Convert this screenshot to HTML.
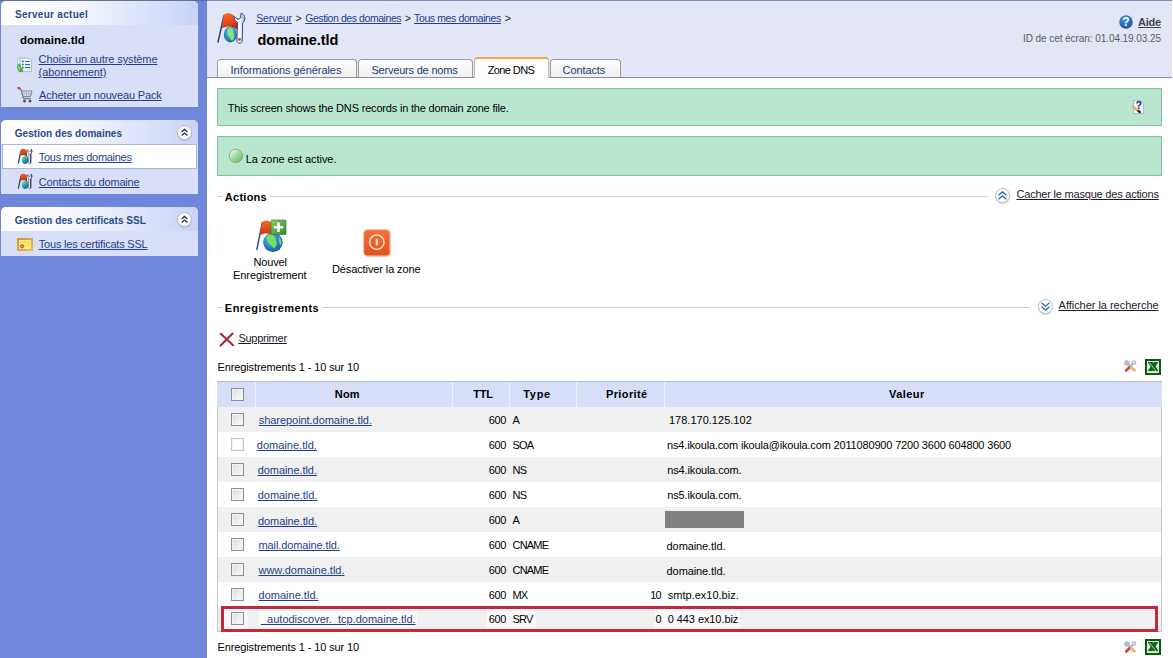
<!DOCTYPE html>
<html lang="fr">
<head>
<meta charset="utf-8">
<title>Zone DNS - domaine.tld</title>
<style>
*{box-sizing:border-box;margin:0;padding:0}
html,body{width:1173px;height:658px;overflow:hidden;background:#fff}
body{font-family:"Liberation Sans",sans-serif;font-size:11px;color:#000;position:relative}
.abs,.t{position:absolute;white-space:nowrap}
a.t{cursor:pointer}
#side{position:absolute;left:0;top:0;width:207px;height:658px;background:#6e87da}
.panel{position:absolute;left:1px;width:197px;background:#d8dff7;border-radius:5px 5px 0 0}
.hd{position:absolute;left:1px;width:197px;height:24px;border-radius:5px 5px 0 0;background:linear-gradient(90deg,#ffffff 0%,#f6f8fe 35%,#c8d3f6 100%)}
#hdr{position:absolute;left:207px;top:0;width:965px;height:78px;background:#e2e6f6;border-top:1px solid #7d8db8;border-bottom:1px solid #8c8f99}
.tab{position:absolute;top:59px;height:18px;border:1px solid #9a9ca3;border-bottom:none;border-radius:4px 4px 0 0;background:linear-gradient(#ffffff,#efefed)}
.tab.act{top:57px;height:21px;background:#fff;border-color:#b9bcc4;border-top:2px solid #f0ab45}
.green{position:absolute;left:217px;width:945px;background:#b9e6cf;border:1px solid #86c3a3}
.hr{position:absolute;height:1px;background:#d0d0d0}
.circ{position:absolute;width:15px;height:15px;border-radius:50%;background:#fff;border:1px solid #b4bcd4;box-shadow:0 1px 1px rgba(120,130,170,.35)}
.circ svg{position:absolute;left:1px;top:1px}
.row{position:absolute;left:217px;width:945px;height:25px;border-left:1px solid #c8c8c8;border-right:1px solid #c8c8c8}
.row.g{background:#f0f0f0}
.cb{position:absolute;width:13px;height:13px;border:1px solid #8e8f8f;background:linear-gradient(135deg,#dcdcdc,#fbfbfb);box-shadow:inset 0 0 0 1px #f3f3f3}
.th{position:absolute;top:382px;height:25px;background:#d6dff7}
</style>
</head>
<body>
<div id="side"></div>
<div class="abs" style="left:0;top:0;width:207px;height:1px;background:#62709c"></div><div class="panel" style="top:1px;height:106px"></div><div class="hd" style="top:1px;height:24px"></div>
<span class="t" style="left:15.0px;top:9px;font-size:10px;line-height:12px;letter-spacing:0.290px;font-weight:bold;color:#2a4b87">Serveur actuel</span>
<span class="t" style="left:20.0px;top:33px;font-size:11.5px;line-height:14px;letter-spacing:0.024px;font-weight:bold">domaine.tld</span>
<svg class="abs" style="left:17px;top:57px" width="16" height="16" viewBox="0 0 16 16"><defs><linearGradient id="dg" x1="0" y1="0" x2="1" y2="1"><stop offset="0" stop-color="#ffffff"/><stop offset="1" stop-color="#cfe6ee"/></linearGradient></defs><rect x=".5" y=".5" width="8.5" height="9" fill="#d4ecf0" stroke="#a8ccd8" stroke-width=".7"/><path d="M3.2 1.2 H12 L14.6 3.8 V14.6 H3.2 Z" fill="url(#dg)" stroke="#9ab4c8" stroke-width=".8"/><path d="M5 4.5h1.6M5 7.5h1.6M5 10.5h1.6" stroke="#2a5a7a" stroke-width="1.6"/><path d="M8 4.5h5M8 7.5h5M8 10.5h5" stroke="#2a6a8a" stroke-width="1.1"/><path d="M.6 8.2 C1 6.8 3.2 6.8 3.4 8.4 L3.6 11 L5.8 11.8 L5.6 14.6 L2.4 14.8 C.8 13.5 .2 10.5 .6 8.2Z" fill="#4cae3c" stroke="#2f8a2a" stroke-width=".5"/><path d="M1.6 9 L2.6 12.6" stroke="#d8f4c8" stroke-width=".9"/></svg>
<a class="t" style="left:38.6px;top:53px;font-size:11px;line-height:13px;letter-spacing:-0.120px;color:#1f4088;text-decoration:underline">Choisir un autre système</a>
<a class="t" style="left:38.6px;top:66px;font-size:11px;line-height:13px;letter-spacing:-0.050px;color:#1f4088;text-decoration:underline">(abonnement)</a>
<svg class="abs" style="left:17px;top:87px" width="16" height="17" viewBox="0 0 16 17"><path d="M1 1.5 L4 2.5 L6.5 11.5 L14 11.5" fill="none" stroke="#7a8494" stroke-width="1.3"/><path d="M4.5 4 L15 4 L13.5 9.5 L6 9.5 Z" fill="#dfe6f2" stroke="#7a8494" stroke-width="1"/><path d="M7 4v5.5M9.5 4v5.5M12 4v5.5M5 6.7h9.3" stroke="#9aa4b4" stroke-width=".7"/><circle cx="7.5" cy="14" r="1.5" fill="#555"/><circle cx="13" cy="14" r="1.5" fill="#555"/><path d="M0.5 0.5 L3.5 1.5" stroke="#d23" stroke-width="1.5"/></svg>
<a class="t" style="left:39.0px;top:89px;font-size:11px;line-height:13px;letter-spacing:-0.143px;color:#1f4088;text-decoration:underline">Acheter un nouveau Pack</a>

<div class="panel" style="top:120px;height:74px"></div><div class="hd" style="top:120px"></div>
<span class="t" style="left:14.8px;top:128px;font-size:10px;line-height:12px;letter-spacing:0.025px;font-weight:bold;color:#2a4b87">Gestion des domaines</span>
<span class="circ" style="left:177px;top:125px"><svg width="11" height="11" viewBox="0 0 11 11"><path d="M2.6 5 L5.5 2.4 L8.4 5 M2.6 8.6 L5.5 6 L8.4 8.6" fill="none" stroke="#1c2f66" stroke-width="1.3"/></svg></span>
<div class="abs" style="left:2px;top:144px;width:195px;height:25px;background:#fff;border:1px solid #a8b6e2"></div>
<svg class="abs" style="left:17px;top:148px" width="16" height="17" viewBox="0 0 16 17"><defs><linearGradient id="sf1" x1="0" y1="0" x2="0.2" y2="1"><stop offset="0" stop-color="#ee5f1e"/><stop offset=".65" stop-color="#d8481c"/><stop offset="1" stop-color="#7e2c1e"/></linearGradient><linearGradient id="sg1" x1="0.1" y1="0" x2="0.8" y2="1"><stop offset="0" stop-color="#b4f0a8"/><stop offset=".45" stop-color="#38b0a8"/><stop offset="1" stop-color="#14509c"/></linearGradient></defs><path d="M4 2.6 L1.3 15.6" stroke="#30425e" stroke-width="1.3" fill="none"/><ellipse cx="8.1" cy="11.6" rx="3.3" ry="4.4" fill="url(#sg1)"/><path d="M3.8 1.6 C5.5 .4 7.5 .6 9 1.8 L10.2 2.6 L9.9 8.6 C8.5 6.6 5.8 6.4 3 8 Z" fill="url(#sf1)"/><path d="M10.6 1.6 C10.4 3.4 11 4.6 11.9 5.2 L11.6 14.6 C11.6 16.4 13.9 16.4 13.9 14.6 L14 5.4 C15 4.6 15.2 2.6 14.2 1.2 L13.4 3.4 L12.2 3.6 Z" fill="#fff" stroke="#3a4a6e" stroke-width=".7"/><path d="M13.7 5.6 L13.6 15" stroke="#2c3c5e" stroke-width="1.1"/><path d="M14.3 1.4 C15 2.6 14.9 4.4 14 5.3" stroke="#2c3c5e" stroke-width="1" fill="none"/></svg>
<a class="t" style="left:38.8px;top:151px;font-size:11px;line-height:13px;letter-spacing:-0.296px;color:#1f4088;text-decoration:underline">Tous mes domaines</a>
<svg class="abs" style="left:17px;top:173px" width="16" height="17" viewBox="0 0 16 17"><defs><linearGradient id="sf2" x1="0" y1="0" x2="0.2" y2="1"><stop offset="0" stop-color="#ee5f1e"/><stop offset=".65" stop-color="#d8481c"/><stop offset="1" stop-color="#7e2c1e"/></linearGradient><linearGradient id="sg2" x1="0.1" y1="0" x2="0.8" y2="1"><stop offset="0" stop-color="#b4f0a8"/><stop offset=".45" stop-color="#38b0a8"/><stop offset="1" stop-color="#14509c"/></linearGradient></defs><path d="M4 2.6 L1.3 15.6" stroke="#30425e" stroke-width="1.3" fill="none"/><ellipse cx="8.1" cy="11.6" rx="3.3" ry="4.4" fill="url(#sg2)"/><path d="M3.8 1.6 C5.5 .4 7.5 .6 9 1.8 L10.2 2.6 L9.9 8.6 C8.5 6.6 5.8 6.4 3 8 Z" fill="url(#sf2)"/><path d="M10.6 1.6 C10.4 3.4 11 4.6 11.9 5.2 L11.6 14.6 C11.6 16.4 13.9 16.4 13.9 14.6 L14 5.4 C15 4.6 15.2 2.6 14.2 1.2 L13.4 3.4 L12.2 3.6 Z" fill="#fff" stroke="#3a4a6e" stroke-width=".7"/><path d="M13.7 5.6 L13.6 15" stroke="#2c3c5e" stroke-width="1.1"/><path d="M14.3 1.4 C15 2.6 14.9 4.4 14 5.3" stroke="#2c3c5e" stroke-width="1" fill="none"/></svg>
<a class="t" style="left:38.8px;top:176px;font-size:11px;line-height:13px;letter-spacing:-0.171px;color:#1f4088;text-decoration:underline">Contacts du domaine</a>

<div class="panel" style="top:207px;height:49px"></div><div class="hd" style="top:207px"></div>
<span class="t" style="left:14.8px;top:215px;font-size:10px;line-height:12px;letter-spacing:0.063px;font-weight:bold;color:#2a4b87">Gestion des certificats SSL</span>
<span class="circ" style="left:177px;top:212px"><svg width="11" height="11" viewBox="0 0 11 11"><path d="M2.6 5 L5.5 2.4 L8.4 5 M2.6 8.6 L5.5 6 L8.4 8.6" fill="none" stroke="#1c2f66" stroke-width="1.3"/></svg></span>
<svg class="abs" style="left:17px;top:238px" width="16" height="13" viewBox="0 0 16 13"><defs><linearGradient id="cg" x1="0" y1="0" x2="1" y2="1"><stop offset="0" stop-color="#c09838"/><stop offset="1" stop-color="#e4c258"/></linearGradient></defs><rect x="0" y="0" width="16" height="13" fill="url(#cg)"/><rect x="2" y="2" width="12" height="9" fill="#fbe77c"/><path d="M3.5 4.2h9M8 7h4.5" stroke="#ecd060" stroke-width="1"/><circle cx="5.1" cy="8.3" r="1.6" fill="#f0a080" stroke="#b84424" stroke-width="1"/></svg>
<a class="t" style="left:38.8px;top:238px;font-size:11px;line-height:13px;letter-spacing:-0.209px;color:#1f4088;text-decoration:underline">Tous les certificats SSL</a>

<div id="hdr"></div>
<svg class="abs" style="left:216px;top:11px" width="30" height="33" viewBox="0 0 30 33"><defs><linearGradient id="fg3" x1="0" y1="0" x2="0.3" y2="1"><stop offset="0" stop-color="#f7701c"/><stop offset=".7" stop-color="#e2471a"/><stop offset="1" stop-color="#a82a1a"/></linearGradient><radialGradient id="gg3" cx=".45" cy=".35" r=".7"><stop offset="0" stop-color="#4fc8e8"/><stop offset="1" stop-color="#1560a8"/></radialGradient><linearGradient id="wg3" x1="0" y1="0" x2="1" y2="0"><stop offset="0" stop-color="#ffffff"/><stop offset=".6" stop-color="#f4f6fa"/><stop offset="1" stop-color="#8aa0c8"/></linearGradient></defs><path d="M8 4.3 L1.9 31.6" stroke="#1f3f7a" stroke-width="1.5" fill="none"/><ellipse cx="14.4" cy="23.4" rx="6.6" ry="8" fill="url(#gg3)"/><path d="M12 17 C15 15.5 18 17.5 17.4 20.5 C17 22.5 19 24 18.2 27 C17.6 29.6 15 30.4 14.4 28 C13.9 26 11.8 25 11.4 22.5 C11.2 20.5 11 18.5 12 17Z" fill="#84e27c"/><path d="M7.6 3.8 C10 2 13.5 1.6 16 3.2 C18 4.5 19.5 6.5 22 7.5 L20.8 19 C18.5 15.2 12.5 14.2 6 17 Z" fill="url(#fg3)"/><path d="M18 5.6 C18.2 8.5 19.5 10.5 21.6 11.5 L20.9 29 C20.9 33.3 26.3 33.3 26.3 29 L26.6 12 C28.6 10.8 29.4 8 28.6 5.6 C28 3.8 26.6 2.6 25 2.2 L24.6 7 L21.8 8.4 Z" fill="url(#wg3)" stroke="#2f4f8f" stroke-width="1"/><circle cx="23.5" cy="28.4" r="1.4" fill="#d6303a"/></svg>
<a class="t" style="left:256.2px;top:12px;font-size:10.5px;line-height:13px;letter-spacing:-0.152px;color:#1f4088;text-decoration:underline">Serveur</a>
<span class="t" style="left:295.6px;top:12px;font-size:10.5px;line-height:13px;letter-spacing:-0.741px;color:#222">&gt;</span>
<a class="t" style="left:305.2px;top:12px;font-size:10.5px;line-height:13px;letter-spacing:-0.424px;color:#1f4088;text-decoration:underline">Gestion des domaines</a>
<span class="t" style="left:404.7px;top:12px;font-size:10.5px;line-height:13px;letter-spacing:-0.800px;color:#222">&gt;</span>
<a class="t" style="left:414.1px;top:12px;font-size:10.5px;line-height:13px;letter-spacing:-0.388px;color:#1f4088;text-decoration:underline">Tous mes domaines</a>
<span class="t" style="left:504.8px;top:12px;font-size:10.5px;line-height:13px;letter-spacing:-0.800px;color:#222">&gt;</span>
<span class="t" style="left:257.5px;top:32px;font-size:14.5px;line-height:17px;letter-spacing:-0.043px;font-weight:bold">domaine.tld</span>
<svg class="abs" style="left:1119px;top:15px" width="14" height="14" viewBox="0 0 15 15"><defs><radialGradient id="hg" cx=".4" cy=".3" r=".8"><stop offset="0" stop-color="#4a9be0"/><stop offset="1" stop-color="#0d4a9c"/></radialGradient></defs><circle cx="7.5" cy="7.5" r="7.2" fill="url(#hg)"/><text x="7.5" y="11.8" text-anchor="middle" font-family="Liberation Sans,sans-serif" font-weight="bold" font-size="13" fill="#fff">?</text></svg>
<a class="t" style="left:1138.0px;top:16px;font-size:11px;line-height:13px;letter-spacing:-0.211px;font-weight:bold;color:#41465a;text-decoration:underline">Aide</a>
<span class="t" style="left:1023.0px;top:33px;font-size:10px;line-height:12px;letter-spacing:-0.068px;color:#5c5c5c">ID de cet écran: 01.04.19.03.25</span>
<div class="tab" style="left:217px;width:140px"></div>
<div class="tab" style="left:358px;width:115px"></div>
<div class="tab act" style="left:474px;width:75px"></div>
<div class="tab" style="left:550px;width:71px"></div>
<span class="t" style="left:230.6px;top:64px;font-size:11px;line-height:13px;letter-spacing:-0.050px;color:#1f3a7a">Informations générales</span>
<span class="t" style="left:371.4px;top:64px;font-size:11px;line-height:13px;letter-spacing:-0.198px;color:#1f3a7a">Serveurs de noms</span>
<span class="t" style="left:487.7px;top:64px;font-size:11px;line-height:13px;letter-spacing:-0.595px">Zone DNS</span>
<span class="t" style="left:562.6px;top:64px;font-size:11px;line-height:13px;letter-spacing:-0.103px;color:#1f3a7a">Contacts</span>


<div class="green" style="top:88px;height:38px"></div>
<span class="t" style="left:227.7px;top:102px;font-size:11px;line-height:13px;letter-spacing:-0.185px">This screen shows the DNS records in the domain zone file.</span>
<svg class="abs" style="left:1131px;top:99px" width="15" height="16" viewBox="0 0 15 16"><path d="M2.6 1.6h6.6l3.2 3v10H2.6z" fill="#f4f8fc" stroke="#8eaccc" stroke-width=".8"/><text x="7.8" y="9.6" text-anchor="middle" font-family="Liberation Sans,sans-serif" font-weight="bold" font-size="10" fill="#16244e">?</text><path d="M1.8 7.6 L7.6 12.2" stroke="#dcae68" stroke-width="2.6" stroke-linecap="round"/><path d="M7.4 12 L9 13.2" stroke="#2a2a3a" stroke-width="2.2" stroke-linecap="round"/></svg>
<div class="green" style="top:136px;height:40px"></div>
<svg class="abs" style="left:228px;top:148px" width="16" height="16" viewBox="0 0 16 16"><defs><linearGradient id="bg1" x1="0.1" y1="0.1" x2="0.9" y2="0.9"><stop offset="0" stop-color="#eefaea"/><stop offset=".45" stop-color="#a8dca4"/><stop offset="1" stop-color="#62c064"/></linearGradient></defs><circle cx="7.9" cy="7.9" r="6.7" fill="url(#bg1)" stroke="#84a48c" stroke-width=".9"/></svg>
<span class="t" style="left:245.8px;top:153px;font-size:11px;line-height:13px;letter-spacing:-0.060px">La zone est active.</span>

<div class="hr" style="left:217px;top:196px;width:771px"></div>
<div class="abs" style="left:222px;top:190px;width:48px;height:14px;background:#fff"></div>
<span class="t" style="left:224.8px;top:191px;font-size:11px;line-height:13px;letter-spacing:0.265px;font-weight:bold">Actions</span>
<span class="circ" style="left:995px;top:188px"><svg width="11" height="11" viewBox="0 0 11 11"><path d="M1.5 5.3 L5.5 1.9 L9.5 5.3 M1.5 9.2 L5.5 5.8 L9.5 9.2" fill="none" stroke="#2d6a9c" stroke-width="1.3"/></svg></span>
<a class="t" style="left:1016.5px;top:188px;font-size:11px;line-height:13px;letter-spacing:-0.206px;color:#1a1a2a;text-decoration:underline">Cacher le masque des actions</a>

<svg class="abs" style="left:255px;top:219px" width="33" height="34" viewBox="0 0 33 34"><defs><linearGradient id="fg9" x1="0" y1="0" x2="0" y2="1"><stop offset="0" stop-color="#f4681c"/><stop offset="1" stop-color="#c93a1c"/></linearGradient><radialGradient id="gg9" cx=".4" cy=".35" r=".7"><stop offset="0" stop-color="#4fc0e8"/><stop offset="1" stop-color="#14569c"/></radialGradient><linearGradient id="pg" x1="0" y1="0" x2="1" y2="1"><stop offset="0" stop-color="#8fd06a"/><stop offset="1" stop-color="#2a8a2a"/></linearGradient></defs><path d="M7.4 3.2 L1.8 30.8" stroke="#2a4a9a" stroke-width="1.5" fill="none"/><circle cx="17.9" cy="23.4" r="9.7" fill="url(#gg9)"/><path d="M11.5 17.5 C14 14.5 19 15 20 18.5 C20.5 21 22 22.5 21.5 25.5 C21 28.5 18.5 30 17.5 28 C16.8 26 14 25.5 13 23 C12 21 10.6 19.5 11.5 17.5Z M23.5 17.2 C25.8 19 27 23 25.6 26.4 C24 25 24.2 21 23.5 17.2Z" fill="#78dc6a"/><path d="M7 3 C10 1 13 1.5 16 3 L16 15.5 C13 14 9 14 4.6 16.4 Z" fill="url(#fg9)"/><rect x="16" y="1" width="15" height="14.5" rx="1" fill="url(#pg)" stroke="#2a7a2a" stroke-width=".6"/><path d="M23.5 3.5v9.5M18.7 8.2h9.6" stroke="#fff" stroke-width="2.6"/></svg>
<span class="t" style="left:253.4px;top:256px;font-size:11px;line-height:13px;letter-spacing:-0.142px">Nouvel</span>
<span class="t" style="left:233.0px;top:269px;font-size:11px;line-height:13px;letter-spacing:-0.071px">Enregistrement</span>
<svg class="abs" style="left:363px;top:229px" width="29" height="29" viewBox="0 0 29 29"><defs><linearGradient id="og" x1="0" y1="0" x2="0" y2="1"><stop offset="0" stop-color="#f4703a"/><stop offset="1" stop-color="#e2501c"/></linearGradient></defs><rect x="1.5" y="1.5" width="26.5" height="26.5" rx="4" fill="#c9b8b0" opacity=".6"/><rect x=".8" y=".8" width="26" height="26" rx="3.5" fill="url(#og)" stroke="#f4a888" stroke-width=".9"/><circle cx="13.8" cy="13.2" r="7.2" fill="none" stroke="#fbe0d0" stroke-width="1.6"/><path d="M13.8 9.8v6.6" stroke="#fbe0d0" stroke-width="2.2"/></svg>
<span class="t" style="left:332.0px;top:263px;font-size:11px;line-height:13px;letter-spacing:-0.111px">Désactiver la zone</span>

<div class="hr" style="left:217px;top:307px;width:813px"></div>
<div class="abs" style="left:222px;top:301px;width:100px;height:14px;background:#fff"></div>
<span class="t" style="left:224.8px;top:302px;font-size:11px;line-height:13px;letter-spacing:0.506px;font-weight:bold">Enregistrements</span>
<span class="circ" style="left:1037.5px;top:298.5px"><svg width="11" height="11" viewBox="0 0 11 11"><path d="M1.5 1.8 L5.5 5.2 L9.5 1.8 M1.5 5.7 L5.5 9.1 L9.5 5.7" fill="none" stroke="#2d6a9c" stroke-width="1.3"/></svg></span>
<a class="t" style="left:1058.6px;top:299px;font-size:11px;line-height:13px;letter-spacing:-0.033px;color:#1a1a2a;text-decoration:underline">Afficher la recherche</a>

<svg class="abs" style="left:219px;top:332px" width="16" height="15" viewBox="0 0 16 15"><path d="M1.8 1.8 L14 13.2 M13.6 1.6 L1.6 13.6" stroke="#a32a3c" stroke-width="2.1" stroke-linecap="round"/></svg>
<a class="t" style="left:238.4px;top:332px;font-size:11px;line-height:13px;letter-spacing:-0.261px;color:#1a1a2a;text-decoration:underline">Supprimer</a>
<span class="t" style="left:217.5px;top:361px;font-size:11px;line-height:13px;letter-spacing:-0.117px">Enregistrements 1 - 10 sur 10</span>
<svg class="abs" style="left:1124px;top:360px" width="13" height="13" viewBox="0 0 13 13"><path d="M10 2.5 L6 6.5" stroke="#b4b8c8" stroke-width="2.4" stroke-linecap="round"/><path d="M2.8 2.8 L6.5 6.5" stroke="#b4b8c8" stroke-width="2.4" stroke-linecap="round"/><circle cx="2.9" cy="2.9" r="2" fill="none" stroke="#b4b8c8" stroke-width="1.5"/><circle cx="10" cy="2.6" r="1.7" fill="#dfe2ec" stroke="#b4b8c8" stroke-width="1.1"/><path d="M5.6 7.2 L2.2 10.4" stroke="#c8484c" stroke-width="2.8" stroke-linecap="round"/><path d="M7.2 7.2 L10.4 10.2" stroke="#e2b468" stroke-width="2.8" stroke-linecap="round"/></svg>
<svg class="abs" style="left:1145px;top:359px" width="16" height="16" viewBox="0 0 16 16"><rect x="0" y="0" width="16" height="16" fill="#0b5a12"/><rect x="2" y="2" width="12" height="12" fill="#dcf2d6"/><path d="M2.6 3 L7.6 3 L13.6 12.2 L8.6 12.2 Z" fill="#0b5a12"/><path d="M13.4 3 L9 3 L2.6 12.2 L7.2 12.2 Z" fill="#0d6216"/><path d="M4.4 3.6 L11 12" stroke="#dcf2d6" stroke-width=".8"/><rect x="2" y="12.4" width="12" height="1.6" fill="#dcf2d6"/></svg>

<div class="abs" style="left:217px;top:381px;width:945px;height:26px;background:#eef1fb;border-top:1px solid #b4bcd6"></div>
<div class="th" style="left:217px;width:38px"></div><i class="cb" style="left:231px;top:388px"></i>
<div class="th" style="left:256px;width:196px"></div>
<div class="th" style="left:453px;width:56px"></div>
<div class="th" style="left:510px;width:66px"></div>
<div class="th" style="left:577px;width:87px"></div>
<div class="th" style="left:665px;width:497px"></div>
<span class="t" style="left:334.8px;top:388px;font-size:11px;line-height:13px;letter-spacing:0.149px;font-weight:bold">Nom</span>
<span class="t" style="left:473.3px;top:388px;font-size:11px;line-height:13px;letter-spacing:-0.291px;font-weight:bold">TTL</span>
<span class="t" style="left:523.2px;top:388px;font-size:11px;line-height:13px;letter-spacing:0.710px;font-weight:bold">Type</span>
<span class="t" style="left:606.0px;top:388px;font-size:11px;line-height:13px;letter-spacing:0.373px;font-weight:bold">Priorité</span>
<span class="t" style="left:889.0px;top:388px;font-size:11px;line-height:13px;letter-spacing:0.445px;font-weight:bold">Valeur</span>
<div class="row g" style="top:407px"></div><i class="cb" style="left:231px;top:413px"></i><a class="t" style="left:258.8px;top:414px;font-size:11px;line-height:13px;letter-spacing:-0.055px;color:#1f4088;text-decoration:underline">sharepoint.domaine.tld.</a><span class="t" style="left:488.7px;top:414px;font-size:11px;line-height:13px;letter-spacing:-0.353px">600</span><span class="t" style="left:512.5px;top:414px;font-size:11px;line-height:13px;letter-spacing:-0.544px">A</span><span class="t" style="left:668.9px;top:414px;font-size:11px;line-height:13px;letter-spacing:0.020px">178.170.125.102</span>
<div class="row " style="top:432px"></div><i class="cb" style="left:231px;top:438px;border-color:#c4c4c4;background:#fff"></i><a class="t" style="left:256.8px;top:439px;font-size:11px;line-height:13px;letter-spacing:0.014px;color:#1f4088;text-decoration:underline">domaine.tld.</a><span class="t" style="left:488.7px;top:439px;font-size:11px;line-height:13px;letter-spacing:-0.353px">600</span><span class="t" style="left:512.5px;top:439px;font-size:11px;line-height:13px;letter-spacing:-0.800px">SOA</span><span class="t" style="left:667.0px;top:439px;font-size:11px;line-height:13px;letter-spacing:-0.164px">ns4.ikoula.com ikoula@ikoula.com 2011080900 7200 3600 604800 3600</span>
<div class="row g" style="top:457px"></div><i class="cb" style="left:231px;top:463px"></i><a class="t" style="left:257.7px;top:464px;font-size:11px;line-height:13px;letter-spacing:-0.061px;color:#1f4088;text-decoration:underline">domaine.tld.</a><span class="t" style="left:488.7px;top:464px;font-size:11px;line-height:13px;letter-spacing:-0.353px">600</span><span class="t" style="left:512.5px;top:464px;font-size:11px;line-height:13px;letter-spacing:-0.800px">NS</span><span class="t" style="left:667.3px;top:464px;font-size:11px;line-height:13px;letter-spacing:-0.149px">ns4.ikoula.com.</span>
<div class="row " style="top:482px"></div><i class="cb" style="left:231px;top:488px"></i><a class="t" style="left:257.7px;top:489px;font-size:11px;line-height:13px;letter-spacing:-0.020px;color:#1f4088;text-decoration:underline">domaine.tld.</a><span class="t" style="left:488.7px;top:489px;font-size:11px;line-height:13px;letter-spacing:-0.353px">600</span><span class="t" style="left:512.5px;top:489px;font-size:11px;line-height:13px;letter-spacing:-0.800px">NS</span><span class="t" style="left:667.3px;top:489px;font-size:11px;line-height:13px;letter-spacing:-0.149px">ns5.ikoula.com.</span>
<div class="row g" style="top:507px"></div><i class="cb" style="left:231px;top:513px"></i><a class="t" style="left:258.0px;top:515px;font-size:11px;line-height:13px;letter-spacing:-0.078px;color:#1f4088;text-decoration:underline">domaine.tld.</a><span class="t" style="left:488.7px;top:514px;font-size:11px;line-height:13px;letter-spacing:-0.353px">600</span><span class="t" style="left:512.5px;top:514px;font-size:11px;line-height:13px;letter-spacing:-0.544px">A</span><div class="abs" style="left:665px;top:511px;width:79px;height:17px;background:#808080"></div>
<div class="row " style="top:532px"></div><i class="cb" style="left:231px;top:538px"></i><a class="t" style="left:258.5px;top:539px;font-size:11px;line-height:13px;letter-spacing:-0.115px;color:#1f4088;text-decoration:underline">mail.domaine.tld.</a><span class="t" style="left:488.7px;top:539px;font-size:11px;line-height:13px;letter-spacing:-0.353px">600</span><span class="t" style="left:512.5px;top:539px;font-size:11px;line-height:13px;letter-spacing:-0.800px">CNAME</span><span class="t" style="left:666.6px;top:540px;font-size:11px;line-height:13px;letter-spacing:-0.095px">domaine.tld.</span>
<div class="row g" style="top:557px"></div><i class="cb" style="left:231px;top:563px"></i><a class="t" style="left:258.5px;top:564px;font-size:11px;line-height:13px;letter-spacing:-0.014px;color:#1f4088;text-decoration:underline">www.domaine.tld.</a><span class="t" style="left:488.7px;top:564px;font-size:11px;line-height:13px;letter-spacing:-0.353px">600</span><span class="t" style="left:512.5px;top:564px;font-size:11px;line-height:13px;letter-spacing:-0.800px">CNAME</span><span class="t" style="left:666.6px;top:565px;font-size:11px;line-height:13px;letter-spacing:-0.095px">domaine.tld.</span>
<div class="row " style="top:582px"></div><i class="cb" style="left:231px;top:588px"></i><a class="t" style="left:258.5px;top:589px;font-size:11px;line-height:13px;letter-spacing:0.014px;color:#1f4088;text-decoration:underline">domaine.tld.</a><span class="t" style="left:488.7px;top:589px;font-size:11px;line-height:13px;letter-spacing:-0.353px">600</span><span class="t" style="left:512.5px;top:589px;font-size:11px;line-height:13px;letter-spacing:-0.800px">MX</span><span class="t" style="left:650.3px;top:589px;font-size:11px;line-height:13px;letter-spacing:-0.800px">10</span><span class="t" style="left:667.8px;top:589px;font-size:11px;line-height:13px;letter-spacing:-0.002px">smtp.ex10.biz.</span>
<div class="row g" style="top:607px;height:24px"></div><div class="abs" style="left:224px;top:609px;width:24px;height:20px;background:#f8f8f8"></div><div class="abs" style="left:259px;top:611px;width:158px;height:16px;background:#fafafa"></div><div class="abs" style="left:487px;top:610px;width:49px;height:18px;background:#fafafa"></div><div class="abs" style="left:655px;top:610px;width:85px;height:18px;background:#fafafa"></div><i class="cb" style="left:231px;top:612px"></i><a class="t" style="left:261.0px;top:613px;font-size:11px;line-height:13px;letter-spacing:-0.004px;color:#1f4088;text-decoration:underline">_autodiscover._tcp.domaine.tld.</a><span class="t" style="left:488.7px;top:613px;font-size:11px;line-height:13px;letter-spacing:-0.353px">600</span><span class="t" style="left:512.5px;top:613px;font-size:11px;line-height:13px;letter-spacing:-0.800px">SRV</span><span class="t" style="left:655.6px;top:613px;font-size:11px;line-height:13px;letter-spacing:-0.800px">0</span><span class="t" style="left:667.8px;top:613px;font-size:11px;line-height:13px;letter-spacing:-0.083px">0 443 ex10.biz</span>
<div class="abs" style="left:217px;top:631px;width:945px;height:1px;background:#c8c8c8"></div>
<div class="abs" style="left:221px;top:606px;width:937px;height:26px;border:3px solid #c02a3c"></div>
<span class="t" style="left:217.5px;top:641px;font-size:11px;line-height:13px;letter-spacing:-0.117px">Enregistrements 1 - 10 sur 10</span>
<svg class="abs" style="left:1124px;top:641px" width="13" height="13" viewBox="0 0 13 13"><path d="M10 2.5 L6 6.5" stroke="#b4b8c8" stroke-width="2.4" stroke-linecap="round"/><path d="M2.8 2.8 L6.5 6.5" stroke="#b4b8c8" stroke-width="2.4" stroke-linecap="round"/><circle cx="2.9" cy="2.9" r="2" fill="none" stroke="#b4b8c8" stroke-width="1.5"/><circle cx="10" cy="2.6" r="1.7" fill="#dfe2ec" stroke="#b4b8c8" stroke-width="1.1"/><path d="M5.6 7.2 L2.2 10.4" stroke="#c8484c" stroke-width="2.8" stroke-linecap="round"/><path d="M7.2 7.2 L10.4 10.2" stroke="#e2b468" stroke-width="2.8" stroke-linecap="round"/></svg>
<svg class="abs" style="left:1145px;top:639px" width="16" height="16" viewBox="0 0 16 16"><rect x="0" y="0" width="16" height="16" fill="#0b5a12"/><rect x="2" y="2" width="12" height="12" fill="#dcf2d6"/><path d="M2.6 3 L7.6 3 L13.6 12.2 L8.6 12.2 Z" fill="#0b5a12"/><path d="M13.4 3 L9 3 L2.6 12.2 L7.2 12.2 Z" fill="#0d6216"/><path d="M4.4 3.6 L11 12" stroke="#dcf2d6" stroke-width=".8"/><rect x="2" y="12.4" width="12" height="1.6" fill="#dcf2d6"/></svg>

</body>
</html>
